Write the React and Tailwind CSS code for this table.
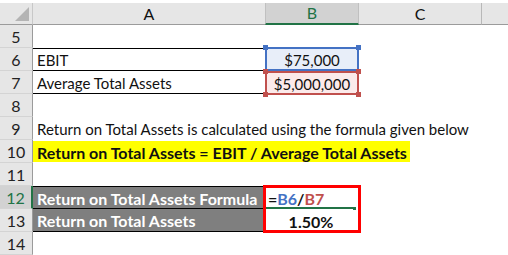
import React from 'react';

const font = { fontFamily: 'Lato, "Open Sans", sans-serif' };

const RowHead = ({ n, active }) => (
  <div
    className={`w-[33px] shrink-0 flex items-center justify-center border-b border-[#d4d4d4] ${
      active ? 'bg-[#d2d2d2] text-[#217346] border-r-2 border-r-[#217346]' : 'bg-[#e6e6e6] text-[#222] border-r border-r-[#9b9b9b]'
    }`}
  >
    <span className="text-[16px] leading-none pt-[2px]">{n}</span>
  </div>
);

const Row = ({ n, active, children }) => (
  <div className="flex h-[23px]">
    <RowHead n={n} active={active} />
    {children}
  </div>
);

const Handle = ({ color, pos }) => (
  <div className={`absolute w-[5px] h-[5px] ${color} ${pos}`} />
);

export default function App() {
  return (
    <div className="w-[508px] h-[255px] bg-white overflow-hidden text-[15px] text-[#111]" style={font}>
      {/* column header */}
      <div className="flex h-[25px] pt-[3px] bg-white">
        <div className="w-[33px] shrink-0 bg-[#e6e6e6] border-r border-[#c8c8c8] border-b border-b-[#9b9b9b] relative">
          <div className="absolute right-[3px] bottom-[3px] w-0 h-0 border-l-[14px] border-l-transparent border-b-[14px] border-b-[#b4b4b4]" />
        </div>
        <div className="w-[232px] shrink-0 bg-[#e6e6e6] border-b border-[#9b9b9b] flex items-center justify-center text-[16px]">A</div>
        <div className="w-[94px] shrink-0 bg-[#d2d2d2] border-x border-[#c0c0c0] border-b-2 border-b-[#217346] flex items-center justify-center text-[#217346] text-[16px]">B</div>
        <div className="w-[123px] shrink-0 bg-[#e6e6e6] border-r border-[#b8b8b8] border-b border-b-[#9b9b9b] flex items-center justify-center text-[16px]">C</div>
        <div className="flex-1 bg-[#e6e6e6] border-b border-[#9b9b9b]" />
      </div>

      <div className="relative">
        <Row n={5}><div className="flex-1" /></Row>
        <Row n={6}>
          <div className="w-[232px] shrink-0 border-t border-b border-black flex items-center pl-[4px] pt-[2px]">EBIT</div>
          <div className="w-[94px] shrink-0 relative">
            <div className="absolute inset-x-0 top-[-1px] h-[24px] bg-[#e8eef9] border-2 border-[#4472c4] flex items-center justify-center pt-[2px]">$75,000</div>
            <Handle color="bg-[#4472c4]" pos="left-[-2px] top-[-3px]" />
            <Handle color="bg-[#4472c4]" pos="right-[-2px] top-[-3px]" />
          </div>
          <div className="flex-1" />
        </Row>
        <Row n={7}>
          <div className="w-[232px] shrink-0 border-b border-black flex items-center pl-[4px] pt-[2px]">Average Total Assets</div>
          <div className="w-[94px] shrink-0 relative">
            <div className="absolute inset-x-0 top-0 h-[24px] bg-[#fbeaea] border-2 border-[#c0504d] flex items-center justify-center pt-[2px]">$5,000,000</div>
            <Handle color="bg-[#c0504d]" pos="left-[-2px] top-[-2px]" />
            <Handle color="bg-[#c0504d]" pos="right-[-2px] top-[-2px]" />
            <Handle color="bg-[#c0504d]" pos="left-[-2px] bottom-[-3px]" />
            <Handle color="bg-[#c0504d]" pos="right-[-2px] bottom-[-3px]" />
          </div>
          <div className="flex-1" />
        </Row>
        <Row n={8}><div className="flex-1" /></Row>
        <Row n={9}>
          <div className="flex items-center pl-[4px] pt-[2px] whitespace-nowrap">Return on Total Assets is calculated using the formula given below</div>
        </Row>
        <Row n={10}>
          <div className="flex items-center">
            <div className="bg-[#ffff00] h-[21px] flex items-center pl-[4px] pr-[3px] font-bold text-[16px] whitespace-nowrap pt-[2px]">Return on Total Assets = EBIT / Average Total Assets</div>
          </div>
        </Row>
        <Row n={11}><div className="flex-1" /></Row>
        <Row n={12} active>
          <div className="w-[230px] shrink-0 bg-[#7f7f7f] border-t border-b border-black text-white font-bold text-[16px] flex items-center pl-[4px] pt-[2px] whitespace-nowrap overflow-hidden">Return on Total Assets Formula</div>
          <div className="w-[96px] shrink-0 relative">
            <div className="absolute inset-x-0 top-0 h-[23px] flex items-center pl-[5px] pt-[2px] font-bold text-[16px]">
              <span>=</span><span className="text-[#4472c4]">B6</span><span>/</span><span className="text-[#c0504d]">B7</span>
            </div>
            <div className="absolute left-[3px] right-[4px] bottom-[0px] h-[2px] bg-[#217346]" />
            <div className="absolute right-[3px] bottom-[-1px] w-[3px] h-[3px] bg-[#217346]" />
          </div>
          <div className="flex-1" />
        </Row>
        <Row n={13}>
          <div className="w-[230px] shrink-0 bg-[#7f7f7f] border-b border-black text-white font-bold text-[16px] flex items-center pl-[4px] pt-[2px]">Return on Total Assets</div>
          <div className="w-[96px] shrink-0 flex items-center justify-center font-bold text-[16px] pt-[2px]">1.50%</div>
          <div className="flex-1" />
        </Row>
        <Row n={14}><div className="flex-1" /></Row>

        {/* selection box around B12:B13 */}
        <div className="absolute left-[263px] top-[160px] w-[98px] h-[48px] border-[3px] border-[#ff0000] pointer-events-none" />
      </div>
    </div>
  );
}
